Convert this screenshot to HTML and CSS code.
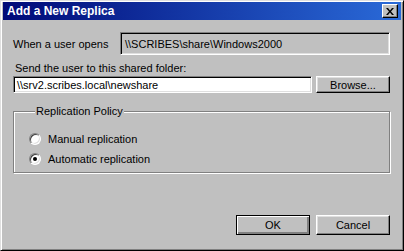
FILE: index.html
```html
<!DOCTYPE html>
<html>

<head>
    <meta charset="utf-8" />
    <title>Add a New Replica</title>
    <link rel="stylesheet" href="styles.css">
</head>

<body>
    <div class="window">
        <div class="titlebar">
            <span class="title">Add a New Replica</span>
            <span class="close">
                <svg width="8" height="7" viewBox="0 0 8 7">
                    <path d="M0 0h2l2 2.5L6 0h2L5 3.5 8 7H6L4 4.5 2 7H0l3-3.5z" fill="#000" />
                </svg>
            </span>
        </div>

        <div class="content">
            <div class="row">
                <label class="label">When a user opens</label>
                <div class="field readonly">\\SCRIBES\share\Windows2000</div>
            </div>

            <div class="caption">Send the user to this shared folder:</div>
            <div class="row">
                <div class="field edit">\\srv2.scribes.local\newshare</div>
                <button class="btn browse">Browse...</button>
            </div>

            <fieldset class="group">
                <legend>Replication Policy</legend>
                <div class="option"><span class="radio"></span>Manual replication</div>
                <div class="option"><span class="radio checked"></span>Automatic replication</div>
            </fieldset>

            <div class="actions">
                <button class="btn default">OK</button>
                <button class="btn">Cancel</button>
            </div>
        </div>
    </div>
</body>

</html>
```

FILE: styles.css
```css
body {
    margin: 0;
    font-family: "Liberation Sans", Arial, sans-serif;
    font-size: 11px;
    color: #000;
}

.window {
    width: 404px;
    height: 251px;
    box-sizing: border-box;
    background-color: #c0c0c0;
    border: 1px solid;
    border-color: #dfdfdf #000 #000 #dfdfdf;
    box-shadow: inset 1px 1px #fff, inset -1px -1px #808080;
    padding: 1px 2px 2px 2px;
    display: flex;
    flex-direction: column;
}

.titlebar {
    height: 18px;
    display: flex;
    align-items: center;
    justify-content: space-between;
    padding: 0 3px 0 4px;
    background: linear-gradient(to right, #000a78, #2a6ad8);
}

.title {
    color: #fff;
    font-weight: bold;
    font-size: 12px;
}

.close {
    width: 16px;
    height: 14px;
    box-sizing: border-box;
    display: flex;
    align-items: center;
    justify-content: center;
    background-color: #c0c0c0;
    border: 1px solid;
    border-color: #fff #000 #000 #fff;
    box-shadow: inset -1px -1px #808080;
}

.content {
    flex: 1;
    display: flex;
    flex-direction: column;
    padding: 12px 11px 13px 10px;
}

.row {
    display: flex;
    align-items: center;
    gap: 4px;
}

.label {
    width: 103px;
}

.field {
    flex: 1;
    box-sizing: border-box;
    border: 1px solid;
    border-color: #808080 #fff #fff #808080;
    box-shadow: inset 1px 1px #000, inset -1px -1px #dfdfdf;
    padding: 0 4px;
    display: flex;
    align-items: center;
    white-space: nowrap;
}

.readonly {
    height: 23px;
    background-color: #c0c0c0;
}

.edit {
    height: 17px;
    background-color: #fff;
    padding-left: 3px;
}

.caption {
    margin: 7px 0 2px 2px;
}

.btn {
    font: inherit;
    color: #000;
    background-color: #c0c0c0;
    box-sizing: border-box;
    width: 74px;
    height: 20px;
    padding: 0;
    border: 1px solid;
    border-color: #fff #000 #000 #fff;
    box-shadow: inset -1px -1px #808080, inset 1px 1px #dfdfdf;
}

.browse {
    height: 17px;
}

.btn.default {
    border: 1px solid #000;
    box-shadow: inset 1px 1px #fff, inset -2px -2px #808080;
}

.group {
    margin: 12px 0 0 0;
    padding: 12px 0 3px 15px;
    border: 1px solid #808080;
    box-shadow: 1px 1px #fff, inset 1px 1px #fff;
}

.group legend {
    padding: 0 1px;
    margin-left: 6px;
    background-color: #c0c0c0;
}

.option {
    height: 20px;
    display: flex;
    align-items: center;
    gap: 7px;
}

.radio {
    width: 12px;
    height: 12px;
    box-sizing: border-box;
    border-radius: 50%;
    background-color: #fff;
    border: 1px solid;
    border-color: #808080 #fff #fff #808080;
    box-shadow: inset 1px 1px #404040, inset -1px -1px #dfdfdf;
    display: flex;
    align-items: center;
    justify-content: center;
}

.radio.checked::after {
    content: "";
    width: 4px;
    height: 4px;
    border-radius: 50%;
    background-color: #000;
}

.actions {
    margin-top: auto;
    display: flex;
    justify-content: flex-end;
    gap: 6px;
}
```
